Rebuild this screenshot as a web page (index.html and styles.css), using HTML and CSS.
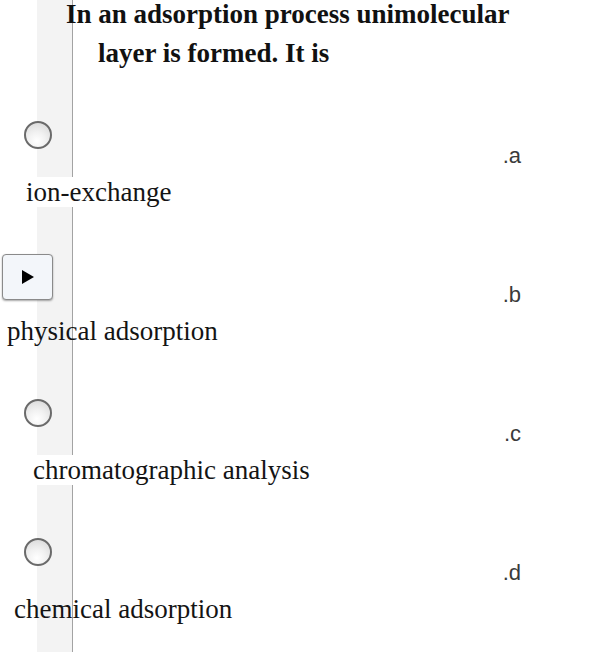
FILE: index.html
```html
<!DOCTYPE html>
<html lang="en">
<head>
<meta charset="utf-8">
<title>Question</title>
<link rel="stylesheet" href="styles.css">
</head>
<body>
<div class="page">
  <div class="question">In an adsorption process unimolecular layer is formed. It is</div>
  <div class="options">
    <div class="option">
      <div class="top">
        <span class="radio"></span>
        <span class="letter">.a</span>
      </div>
      <div class="label label-a"><span class="text boxed">ion-exchange</span></div>
    </div>
    <div class="option">
      <div class="top">
        <span class="play-btn">
          <svg width="12" height="14" viewBox="0 0 12 14"><path d="M0 0 L12 7 L0 14 Z" fill="#000"/></svg>
        </span>
        <span class="letter">.b</span>
      </div>
      <div class="label label-b"><span class="text">physical adsorption</span></div>
    </div>
    <div class="option">
      <div class="top">
        <span class="radio"></span>
        <span class="letter">.c</span>
      </div>
      <div class="label label-c"><span class="text boxed">chromatographic analysis</span></div>
    </div>
    <div class="option">
      <div class="top">
        <span class="radio"></span>
        <span class="letter">.d</span>
      </div>
      <div class="label label-d"><span class="text">chemical adsorption</span></div>
    </div>
  </div>
</div>
</body>
</html>
```

FILE: styles.css
```css
html, body {
  margin: 0;
  padding: 0;
  background: #fff;
}

.page {
  width: 590px;
  height: 652px;
  overflow: hidden;
  background: linear-gradient(to right,
    #ffffff 0, #ffffff 37px,
    #f3f3f3 37px, #f3f3f3 72px,
    #a3a3a3 72px, #a3a3a3 73px,
    #ffffff 73px, #ffffff 100%);
  font-family: "Liberation Serif", "Times New Roman", serif;
  color: #111;
}

.question {
  margin-top: -5px;
  padding-left: 98px;
  text-indent: -32px;
  width: 440px;
  font-size: 27px;
  font-weight: bold;
  line-height: 39px;
  color: #111;
}

.options {
  padding-top: 26px;
}

.option {
  height: 139px;
  display: flex;
  flex-direction: column;
}

.top {
  height: 78px;
  display: flex;
  justify-content: space-between;
  align-items: flex-start;
}

.radio {
  box-sizing: border-box;
  width: 28px;
  height: 28px;
  margin-left: 24px;
  margin-top: 22px;
  border-radius: 50%;
  border: 2px solid #6a6a6a;
  background: radial-gradient(circle at 45% 75%, #ffffff 0%, #f1f1f1 40%, #d4d4d4 100%);
}

.play-btn {
  box-sizing: border-box;
  width: 51px;
  height: 46px;
  margin-left: 2px;
  margin-top: 16px;
  border: 1.5px solid #8a8a8a;
  border-radius: 4px;
  background: #f3f6fa;
  box-shadow: 0 1px 2px rgba(0, 0, 0, 0.35);
  display: flex;
  align-items: center;
  justify-content: center;
}

.play-btn svg {
  display: block;
}

.letter {
  margin-top: 45px;
  margin-right: 69px;
  font-family: "Liberation Sans", Arial, sans-serif;
  font-size: 22px;
  line-height: 24px;
  color: #3a3a3a;
}

.label {
  font-size: 27px;
  line-height: 30px;
  color: #141414;
}

.text {
  display: inline-block;
}

.boxed {
  background: #fff;
}

.label-a { padding-left: 26px; }
.label-b { padding-left: 7px; }
.label-c { padding-left: 33px; }
.label-d { padding-left: 14px; }
```
